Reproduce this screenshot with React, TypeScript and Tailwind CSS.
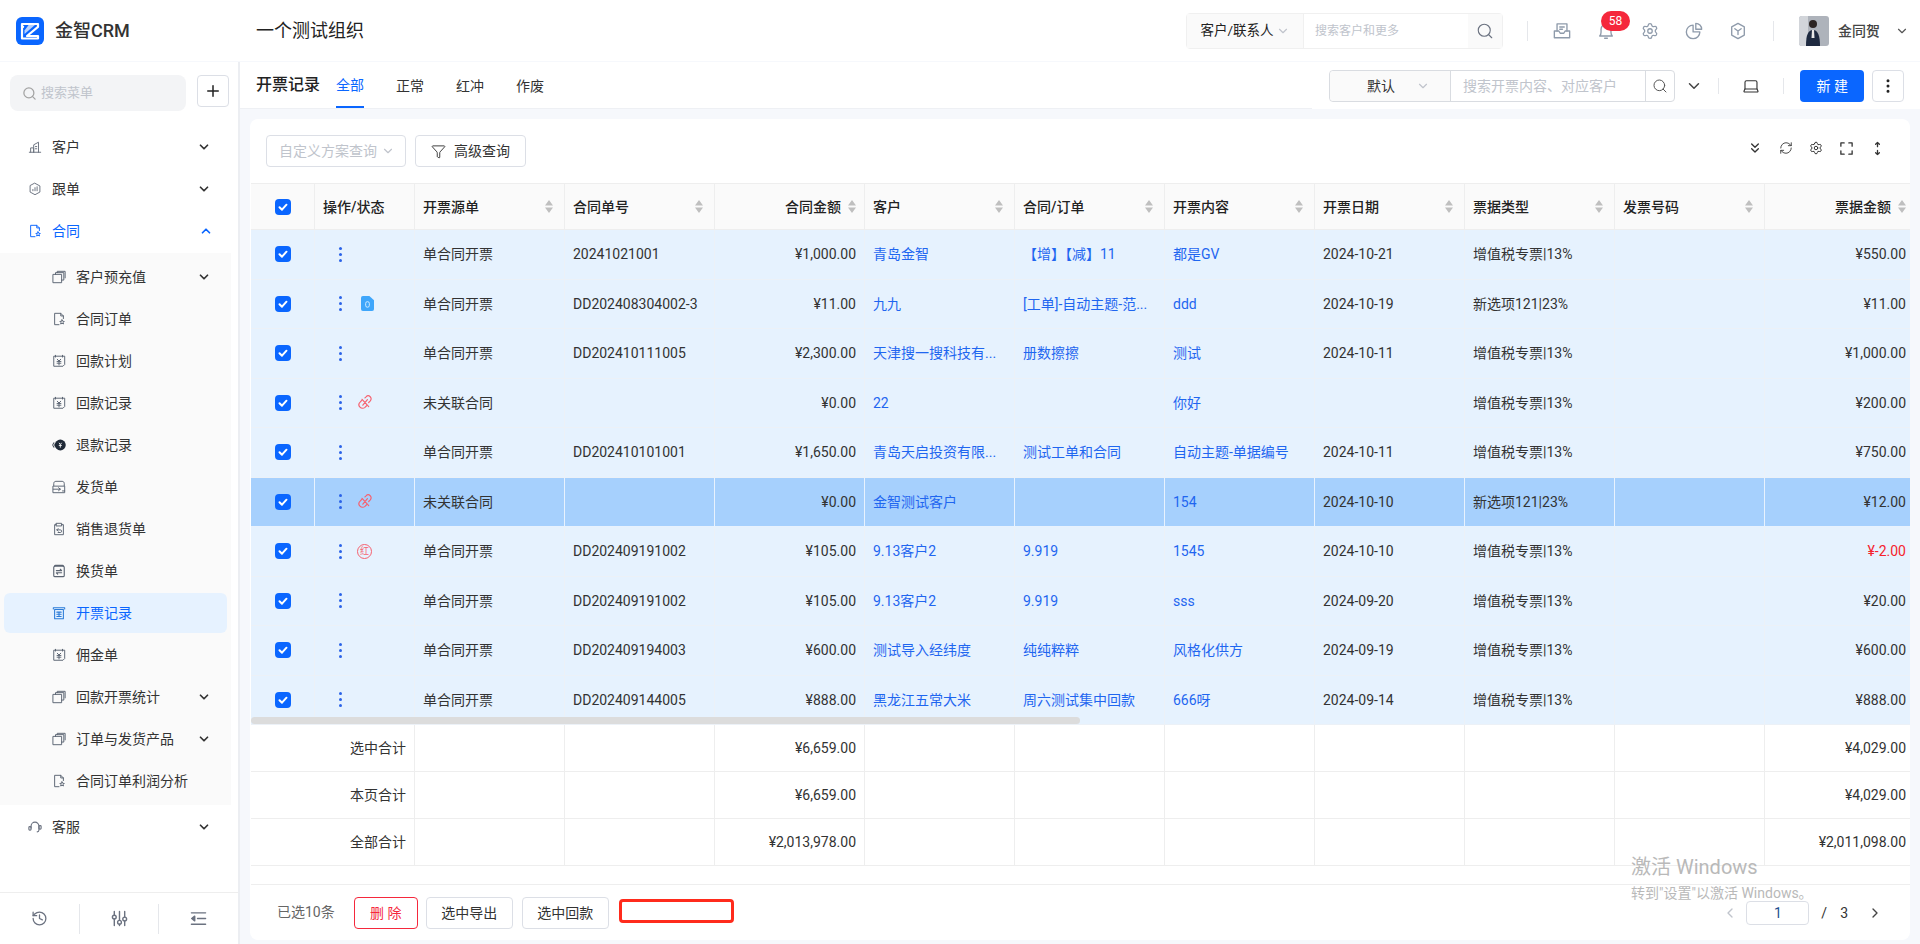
import React from "react";
import { ChevronDown, ChevronUp, ChevronLeft, ChevronRight, Plus, Search, Settings, Filter, MoreVertical, ChevronsDown, RefreshCw, History, Laptop } from "lucide-react";

type P = { className?: string };
const S = ({ className, children, vb = "0 0 16 16", sw = 1.1 }: P & { children: React.ReactNode; vb?: string; sw?: number }) => (
  <svg viewBox={vb} fill="none" stroke="currentColor" strokeWidth={sw} strokeLinecap="round" strokeLinejoin="round" className={className}>{children}</svg>
);

const Building = (p: P) => <S {...p}><path d="M1.5 14h13M3 14V9h3.5v5M6.5 14V5.5L12 2.5V14M8.5 7.5h1.5M8.5 10h1.5" /></S>;
const HexBars = (p: P) => <S {...p}><path d="M8 1.5l5.6 3v7L8 14.5l-5.6-3v-7z" /><path d="M5.6 10V8.5M8 10V6.5M10.4 10V5.5" /></S>;
const DocStar = (p: P) => <S {...p}><path d="M8 14.5H3V1.5h7l3 3v3" /><path d="M10 1.5v3h3" /><path d="M11.5 9l.8 1.6 1.7.2-1.2 1.2.3 1.7-1.6-.8-1.6.8.3-1.7L9 10.8l1.7-.2z" /></S>;
const Stack = (p: P) => <S {...p}><rect x="1.5" y="5" width="9.5" height="9.5" /><path d="M4 5V3h9.5v8.5H11M6 3V1.5h9V9" /></S>;
const Pay = (p: P) => <S {...p}><path d="M4 2.5H2v11.5h10.5l2-2V2.5H12" /><path d="M4 1.5v2M12 1.5v2M4 2.5h8" /><path d="M6 6l2 2 2-2M5.8 8.5h4.4M5.8 10.5h4.4M8 8v4.5" /></S>;
const Refund = (p: P) => (
  <svg viewBox="0 0 16 16" className={p.className}>
    <circle cx="9.5" cy="8" r="6.2" fill="#1f2937" />
    <path d="M8 5.5l1.5 2 1.5-2M7.8 8.5h3.4M9.5 7.5v3.5" stroke="#fff" strokeWidth="1" fill="none" />
    <path d="M2.2 5L.8 8l1.4 3M4 5.5L3 8l1 2.5" stroke="#1f2937" strokeWidth="1" fill="none" />
  </svg>
);
const Ship = (p: P) => <S {...p}><path d="M2 6.5V4c0-1.5 1-2.5 2.5-2.5h7C13 1.5 14 2.5 14 4v2.5M1.5 7h13v7.5h-13z" /><path d="M1.5 10.5h8M7.5 8.8l2 1.7-2 1.7M12 12.5h2.5" /></S>;
const Ret = (p: P) => <S {...p}><path d="M5 3H3v11.5h10V3h-2" /><rect x="5" y="1.5" width="6" height="3" /><path d="M5.5 9h4c1 0 1.5.6 1.5 1.5S10.5 12 9.5 12H7M7 7.5L5.5 9 7 10.5" /></S>;
const Swap = (p: P) => <S {...p} sw={1.3}><rect x="2" y="2.5" width="12" height="12" rx="1.5" /><path d="M3 2.5c0-.7.3-1 1-1h8c.7 0 1 .3 1 1M5 7.5h6l-1.5-1.5M11 10H5l1.5 1.5" /></S>;
const Printer = (p: P) => <S {...p} sw={1.2}><path d="M1.5 2h13M1.5 2v1.500M14.500 2v1.500M3 14.500V4h10v10.500z" /><path d="M5.500 7h5M5.500 9.500h5M8 7v5M5.500 12h5" /></S>;
const Headset = (p: P) => <S {...p} sw={1.3}><path d="M3.500 9V7a4.500 4.500 0 0 1 9 0v4.500c0 1.500-1 2-2 2" /><rect x="1" y="7.500" width="2.500" height="4" rx="1" /><rect x="12.500" y="6.500" width="2.500" height="4" rx="1" /></S>;
const Sliders = (p: P) => <S {...p} sw={1.5} vb="0 0 18 18"><path d="M3.500 1.500v4M3.500 9.500v7M9 1.500v9.500M9 15v1.500M14.500 1.500v6M14.500 11.500v5" /><circle cx="3.500" cy="7.500" r="2" /><circle cx="9" cy="13" r="2" /><circle cx="14.500" cy="9.500" r="2" /></S>;
const Collapse = (p: P) => <S {...p} sw={1.5} vb="0 0 18 18"><path d="M1.500 3h15M8 9h8.500M1.500 15h15" /><path d="M5 6.500L1.800 9 5 11.500z" fill="currentColor" /></S>;
const InboxDoc = (p: P) => <S {...p} vb="0 0 20 20" sw={1.5}><path d="M4.500 10V2h11v8M7.500 5.500h5M7.500 8h3" /><path d="M1.500 10h5l1.500 2.500h4L13.500 10h5v7.500h-17z" /></S>;
const Bell = (p: P) => <S {...p} vb="0 0 20 20" sw={1.500}><path d="M3 15.500c1-1 1.500-2 1.500-4V8a5.500 5.500 0 0 1 11 0v3.500c0 2 .5 3 1.500 4z" /><path d="M8.500 18h3" /></S>;
const PieC = (p: P) => <S {...p} vb="0 0 20 20" sw={1.500}><path d="M9 3.500a7.500 7.500 0 1 0 7.500 7.500H9z" /><path d="M12 1.500a6.500 6.500 0 0 1 6.500 6.500H12z" /></S>;
const HexY = (p: P) => <S {...p} vb="0 0 20 20" sw={1.500}><path d="M10 1.500l7 4v9l-7 4-7-4v-9z" /><path d="M6.500 7.500L10 10l3.500-2.500M10 10v4" /></S>;
const Corners = (p: P) => <S {...p} sw={1.400}><path d="M2 5.500V2h3.500M10.500 2H14v3.500M14 10.500V14h-3.500M5.500 14H2v-3.500" /></S>;
const UpDown = (p: P) => <S {...p} sw={1.400}><path d="M8 1.500v4.500M6 3.500l2-2 2 2M8 10v4.500M6 12.500l2 2 2-2" /></S>;
const Broken = (p: P) => <S {...p} sw={1.100} vb="0 0 14 14"><path d="M6.500 2.700l1-1a2.700 2.700 0 0 1 4 3.800l-1.500 1.500M3.500 5L2 6.700a3 3 0 0 0 4.500 4.800L8 10" /><path d="M8.800 4.300L4.500 9.500M3.800 4L10 10.800" /></S>;
const Lock = (p: P) => (
  <svg viewBox="0 0 14 16" className={p.className}>
    <path d="M2 0h7l5 4.500V14a2 2 0 0 1-2 2H2a2 2 0 0 1-2-2V2a2 2 0 0 1 2-2z" fill="#3ea6fb" />
    <rect x="5" y="6" width="4" height="6" rx="2" fill="none" stroke="#d8eeff" strokeWidth="1" />
  </svg>
);
const Hong = (p: P) => (
  <span className={"flex items-center justify-center rounded-full border border-[#f6616f] text-[#f6616f] text-[9px] leading-none " + (p.className || "")}>红</span>
);

const Check = () => (
  <span className="flex h-4 w-4 items-center justify-center rounded-[4px] bg-[#0a66ff]">
    <svg viewBox="0 0 12 12" className="h-3 w-3" fill="none" stroke="#fff" strokeWidth="2" strokeLinecap="round" strokeLinejoin="round"><path d="M2.500 6.200l2.500 2.500 4.500-5" /></svg>
  </span>
);

const Sort = () => (
  <svg viewBox="0 0 8 13" className="h-[13px] w-2 shrink-0 fill-[#bfbfbf]"><path d="M4 0l4 5.500H0zM0 7.500h8L4 13z" /></svg>
);

const Kebab = () => (
  <span className="flex w-[3px] flex-col gap-[3px]">
    <i className="h-[3px] w-[3px] rounded-full bg-[#2b63e8]" />
    <i className="h-[3px] w-[3px] rounded-full bg-[#2b63e8]" />
    <i className="h-[3px] w-[3px] rounded-full bg-[#2b63e8]" />
  </span>
);

type Item = { icon: (p: P) => React.ReactNode; label: string; arrow?: boolean; active?: boolean };
const subs: Item[] = [
  { icon: Stack, label: "客户预充值", arrow: true },
  { icon: DocStar, label: "合同订单" },
  { icon: Pay, label: "回款计划" },
  { icon: Pay, label: "回款记录" },
  { icon: Refund, label: "退款记录" },
  { icon: Ship, label: "发货单" },
  { icon: Ret, label: "销售退货单" },
  { icon: Swap, label: "换货单" },
  { icon: Printer, label: "开票记录", active: true },
  { icon: Pay, label: "佣金单" },
  { icon: Stack, label: "回款开票统计", arrow: true },
  { icon: Stack, label: "订单与发货产品", arrow: true },
  { icon: DocStar, label: "合同订单利润分析" },
];

const TopItem = ({ icon: I, label, open }: { icon: (p: P) => React.ReactNode; label: string; open?: boolean }) => (
  <div className={"my-0.5 flex h-10 items-center text-sm " + (open ? "text-[#0a66ff]" : "text-[#333333]")}>
    <span className="ml-[28px] flex w-[14px] justify-center"><I className={"h-[14px] w-[14px] " + (open ? "text-[#0a66ff]" : "text-[#6b7280]")} /></span>
    <span className="ml-[10px] flex-1">{label}</span>
    {open ? <ChevronUp className="mr-[18px] h-[14px] w-[14px]" strokeWidth={3} /> : <ChevronDown className="mr-[20px] h-[14px] w-[14px] text-[#333333]" strokeWidth={3} />}
  </div>
);

const Sidebar = () => (
  <aside className="flex w-[240px] shrink-0 flex-col border-r-2 border-[#eceef2] bg-white">
    <div className="flex h-[63px] shrink-0 items-start pt-[13px]">
      <div className="ml-[10px] flex h-9 w-[176px] items-center rounded-lg bg-[#f3f4f6] pl-3 text-[13px] text-[#c0c4cc]">
        <Search className="h-[15px] w-[15px] text-[#a3a3a3]" />
        <span className="ml-[4px]">搜索菜单</span>
      </div>
      <div className="ml-[11px] flex h-8 w-8 items-center justify-center rounded border border-[#dcdfe6]">
        <Plus className="h-[18px] w-[18px] text-[#222222]" strokeWidth={2} />
      </div>
    </div>
    <nav className="w-[231px] flex-1 overflow-hidden">
      <TopItem icon={Building} label="客户" />
      <TopItem icon={HexBars} label="跟单" />
      <TopItem icon={DocStar} label="合同" open />
      <div className="mt-0.5 bg-[#fafafa] py-0.5">
        {subs.map((s) => (
          <div key={s.label} className={"mx-1 my-0.5 flex h-10 items-center rounded-md text-sm " + (s.active ? "bg-[#e6f2ff] text-[#0a66ff]" : "text-[#333333]")}>
            <span className="ml-[46px] flex w-[18px] justify-center"><s.icon className={"h-[14px] w-[14px] " + (s.active ? "text-[#2a7bd8]" : "text-[#5b6472]")} /></span>
            <span className="ml-[8px] flex-1 whitespace-nowrap">{s.label}</span>
            {s.arrow && <ChevronDown className="mr-[16px] h-[14px] w-[14px] text-[#333333]" strokeWidth={3} />}
          </div>
        ))}
      </div>
      <div className="mt-0.5"><TopItem icon={Headset} label="客服" /></div>
    </nav>
    <div className="flex h-[52px] shrink-0 items-center border-t border-[#eeeeee] text-[#6b7280]">
      <div className="flex h-[30px] w-20 items-center justify-center border-r border-[#e5e7eb]"><History className="h-[17px] w-[17px]" strokeWidth={1.8} /></div>
      <div className="flex h-[30px] w-20 items-center justify-center border-r border-[#e5e7eb]"><Sliders className="h-[17px] w-[17px]" /></div>
      <div className="flex h-[30px] w-[79px] items-center justify-center"><Collapse className="h-[17px] w-[17px]" /></div>
    </div>
  </aside>
);

const Header = () => (
  <header className="z-10 flex h-[61px] shrink-0 items-center bg-white">
    <div className="flex w-[256px] items-center pl-4">
      <svg viewBox="0 0 28 28" className="h-7 w-7">
        <rect width="28" height="28" rx="6" fill="#0a66ff" />
        <path d="M6 9.500V7h16v2.800L11 19h11v2.500H6V19z M8 10L6 9.500" fill="none" stroke="#fff" strokeWidth="2.200" strokeLinejoin="round" />
        <path d="M13 7.500h6.500L8.500 17v-3.500z" fill="#fff" opacity="0.7" />
      </svg>
      <span className="ml-[11px] text-[18px] font-medium text-[#333333]">金智CRM</span>
    </div>
    <span className="text-[18px] text-[#222222]">一个测试组织</span>
    <div className="ml-auto flex h-9 w-[317px] items-center rounded border border-[#f0f0f0] text-sm">
      <div className="flex h-full w-[117px] items-center justify-center gap-0.5 border-r border-[#f0f0f0] bg-[#fafafa] text-[#222222]">
        <span className="text-[13.500px]">客户/联系人</span>
        <ChevronDown className="h-[14px] w-[14px] text-[#c0c4cc]" />
      </div>
      <span className="ml-[11px] flex-1 text-xs text-[#c0c4cc]">搜索客户和更多</span>
      <div className="flex h-full w-[34px] items-center justify-center bg-[#fafafa]"><Search className="h-[18px] w-[18px] text-[#6b7280]" strokeWidth={1.5} /></div>
    </div>
    <div className="ml-6 h-5 w-px bg-[#e5e7eb]" />
    <div className="ml-[12px] flex text-[#8f9bab]">
      <span className="flex w-[44px] justify-center"><InboxDoc className="h-[18px] w-[18px]" /></span>
      <span className="relative flex w-[44px] justify-center">
        <Bell className="h-[18px] w-[18px]" />
        <span className="absolute -top-[11px] left-[17px] flex h-5 w-[29px] items-center justify-center rounded-full bg-[#f5283c] text-xs text-white">58</span>
      </span>
      <span className="flex w-[44px] justify-center"><Settings className="h-[18px] w-[18px]" strokeWidth={1.700} /></span>
      <span className="flex w-[44px] justify-center"><PieC className="h-[18px] w-[18px]" /></span>
      <span className="flex w-[44px] justify-center"><HexY className="h-[18px] w-[18px]" /></span>
    </div>
    <div className="ml-[13px] h-5 w-px bg-[#e5e7eb]" />
    <svg viewBox="0 0 30 30" className="ml-[25px] h-[30px] w-[30px] rounded-[3px]">
      <rect width="30" height="30" fill="#aeb3bb" />
      <rect x="0" y="0" width="9" height="30" fill="#d2d5da" />
      <circle cx="14" cy="8" r="4" fill="#2c2422" />
      <path d="M7 30c0-11 2-16 7-16s7 6 7 16z" fill="#1e2a40" />
      <path d="M13 14h2l.500 8h-3z" fill="#e8e8e8" />
    </svg>
    <span className="ml-[9px] text-sm font-medium text-[#444444]">金同贺</span>
    <ChevronDown className="ml-[15px] mr-[11px] h-[14px] w-[14px] text-[#555555]" />
  </header>
);

const SubHeader = () => (
  <div className="flex h-[47px] shrink-0">
    <div className="flex flex-1 items-end border-b border-[#eef0f4] bg-white pl-4">
      <span className="mb-[11px] text-base font-medium text-[#222222]">开票记录</span>
      <div className="ml-4 flex h-full gap-8 text-sm text-[#333333]">
        <span className="flex items-center border-b-2 border-[#0a66ff] pt-0.5 text-[#0a66ff]">全部</span>
        <span className="flex items-center pt-0.5">正常</span>
        <span className="flex items-center pt-0.5">红冲</span>
        <span className="flex items-center pt-0.5">作废</span>
      </div>
    </div>
    <div className="flex w-[608px] items-center bg-white pl-[17px] pr-4">
      <div className="flex h-8 w-[347px] items-center rounded border border-[#d9dce1] text-sm">
        <div className="flex h-full w-[120px] items-center rounded-l bg-[#fafafa] pl-[37px] text-[#333333]">
          <span>默认</span>
          <ChevronDown className="ml-[21px] h-[14px] w-[14px] text-[#c0c4cc]" />
        </div>
        <span className="flex h-full w-[196px] items-center border-x border-[#d9dce1] pl-3 text-[#c0c4cc]">搜索开票内容、对应客户</span>
        <span className="flex flex-1 justify-center"><Search className="h-4 w-4 text-[#555555]" strokeWidth={1.500} /></span>
      </div>
      <ChevronDown className="ml-[10px] h-[18px] w-[18px] text-[#444444]" strokeWidth={2} />
      <div className="ml-[15px] h-4 w-px bg-[#e5e7eb]" />
      <Laptop className="ml-[23px] h-[18px] w-[18px] text-[#333333]" strokeWidth={1.500} />
      <div className="ml-[23px] h-4 w-px bg-[#e5e7eb]" />
      <button className="ml-4 h-8 w-16 rounded bg-[#0a66ff] text-sm text-white">新 建</button>
      <button className="ml-2 flex h-8 w-8 items-center justify-center rounded border border-[#dcdfe6]">
        <MoreVertical className="h-[18px] w-[18px] text-[#222222]" strokeWidth={2} />
      </button>
    </div>
  </div>
);

const heads: [string, boolean?][] = [["开票源单"], ["合同单号"], ["合同金额", true], ["客户"], ["合同/订单"], ["开票内容"], ["开票日期"], ["票据类型"], ["发票号码"], ["票据金额", true]];

type RowT = { mark?: "lock" | "broken" | "hong"; src: string; no: string; amt: string; cust: string; order: string; content: string; date: string; type: string; total: string; red?: boolean; hi?: boolean };
const rows: RowT[] = [
  { src: "单合同开票", no: "20241021001", amt: "¥1,000.00", cust: "青岛金智", order: "【增】【减】11", content: "都是GV", date: "2024-10-21", type: "增值税专票|13%", total: "¥550.00" },
  { mark: "lock", src: "单合同开票", no: "DD202408304002-3", amt: "¥11.00", cust: "九九", order: "[工单]-自动主题-范...", content: "ddd", date: "2024-10-19", type: "新选项121|23%", total: "¥11.00" },
  { src: "单合同开票", no: "DD202410111005", amt: "¥2,300.00", cust: "天津搜一搜科技有...", order: "册数擦擦", content: "测试", date: "2024-10-11", type: "增值税专票|13%", total: "¥1,000.00" },
  { mark: "broken", src: "未关联合同", no: "", amt: "¥0.00", cust: "22", order: "", content: "你好", date: "", type: "增值税专票|13%", total: "¥200.00" },
  { src: "单合同开票", no: "DD202410101001", amt: "¥1,650.00", cust: "青岛天启投资有限...", order: "测试工单和合同", content: "自动主题-单据编号", date: "2024-10-11", type: "增值税专票|13%", total: "¥750.00" },
  { mark: "broken", hi: true, src: "未关联合同", no: "", amt: "¥0.00", cust: "金智测试客户", order: "", content: "154", date: "2024-10-10", type: "新选项121|23%", total: "¥12.00" },
  { mark: "hong", src: "单合同开票", no: "DD202409191002", amt: "¥105.00", cust: "9.13客户2", order: "9.919", content: "1545", date: "2024-10-10", type: "增值税专票|13%", total: "¥-2.00", red: true },
  { src: "单合同开票", no: "DD202409191002", amt: "¥105.00", cust: "9.13客户2", order: "9.919", content: "sss", date: "2024-09-20", type: "增值税专票|13%", total: "¥20.00" },
  { src: "单合同开票", no: "DD202409194003", amt: "¥600.00", cust: "测试导入经纬度", order: "纯纯粹粹", content: "风格化供方", date: "2024-09-19", type: "增值税专票|13%", total: "¥600.00" },
  { src: "单合同开票", no: "DD202409144005", amt: "¥888.00", cust: "黑龙江五常大米", order: "周六测试集中回款", content: "666呀", date: "2024-09-14", type: "增值税专票|13%", total: "¥888.00" },
];

const cellBase = "flex h-full w-[150px] shrink-0 items-center whitespace-nowrap border-r px-2";

const DataRow = ({ r }: { r: RowT }) => {
  const line = r.hi ? "border-[#e8f2fe]" : "border-[#ecf1f7]";
  const cell = cellBase + " " + line;
  const link = " text-[#1f66f0]";
  return (
    <div className={"flex h-[49.500px] border-b text-sm text-[#333333] " + line + (r.hi ? " bg-[#a6d0fd]" : " bg-[#e6f2fe]")}>
      <div className={"flex h-full w-16 shrink-0 items-center justify-center border-r " + line}><Check /></div>
      <div className={"flex h-full w-[100px] shrink-0 items-center border-r pl-[24px] " + line}>
        <Kebab />
        {r.mark === "lock" && <Lock className="ml-[19px] h-[15px] w-[13px]" />}
        {r.mark === "broken" && <Broken className="ml-[16px] h-[15px] w-[15px] text-[#f6616f]" />}
        {r.mark === "hong" && <Hong className="ml-[15px] h-[15px] w-[15px]" />}
      </div>
      <div className={cell}>{r.src}</div>
      <div className={cell}>{r.no}</div>
      <div className={cell + " justify-end"}>{r.amt}</div>
      <div className={cell + link}>{r.cust}</div>
      <div className={cell + link}>{r.order}</div>
      <div className={cell + link}>{r.content}</div>
      <div className={cell}>{r.date}</div>
      <div className={cell}>{r.type}</div>
      <div className={cell}></div>
      <div className={cell + " justify-end" + (r.red ? " text-[#f5222d]" : "")}>{r.total}</div>
    </div>
  );
};

const SumRow = ({ label, a, b }: { label: string; a: string; b: string }) => {
  const cell = "flex h-full w-[150px] shrink-0 items-center justify-end whitespace-nowrap border-r border-[#eeeeee] px-2";
  return (
    <div className="flex h-[47px] border-b border-[#eeeeee] text-sm text-[#333333]">
      <div className="flex h-full w-[164px] shrink-0 items-center justify-end border-r border-[#eeeeee] pr-2">{label}</div>
      <div className={cell} />
      <div className={cell} />
      <div className={cell}>{a}</div>
      <div className={cell} />
      <div className={cell} />
      <div className={cell} />
      <div className={cell} />
      <div className={cell} />
      <div className={cell} />
      <div className={cell}>{b}</div>
    </div>
  );
};

const Card = () => (
  <section className="ml-[10px] mt-[10px] flex h-[821px] w-[1660px] flex-col overflow-hidden rounded-lg bg-white">
    <div className="flex h-16 shrink-0 items-start justify-between pl-4 pr-[25px] pt-4">
      <div className="flex">
        <div className="flex h-8 w-[140px] items-center rounded-sm border border-[#dcdfe6] pl-3 text-sm text-[#c0c4cc]">
          <span>自定义方案查询</span>
          <ChevronDown className="ml-1 h-[14px] w-[14px]" />
        </div>
        <button className="ml-[9px] flex h-8 w-[111px] items-center justify-center rounded border border-[#dcdfe6] text-sm text-[#333333]">
          <Filter className="mr-2 h-[15px] w-[15px]" strokeWidth={1.500} />
          高级查询
        </button>
      </div>
      <div className="flex items-center gap-4 pt-[5px] text-[#333333]">
        <ChevronsDown className="h-4 w-4" strokeWidth={2} />
        <RefreshCw className="h-[14px] w-[14px]" strokeWidth={1.500} />
        <Settings className="h-[14px] w-[14px]" strokeWidth={1.700} />
        <Corners className="h-[15px] w-[15px]" />
        <UpDown className="h-[15px] w-[15px]" />
      </div>
    </div>
    <div className="relative ml-px overflow-hidden border-t border-[#eeeeee]">
      <div className="flex h-[46px] w-max border-b border-[#eeeeee] bg-[#fafafa] text-sm font-medium text-[#222222]">
        <div className="flex h-full w-16 shrink-0 items-center justify-center border-r border-[#eeeeee]"><Check /></div>
        <div className="flex h-full w-[100px] shrink-0 items-center border-r border-[#eeeeee] px-2">操作/状态</div>
        {heads.map(([h, right]) => (
          <div key={h} className={"flex h-full w-[150px] shrink-0 items-center border-r border-[#eeeeee] px-2 " + (right ? "justify-end gap-[7px]" : "justify-between pr-[11px]")}>
            <span>{h}</span>
            {h === "合同/订单" || <Sort />}
            {h === "合同/订单" && <Sort />}
          </div>
        ))}
      </div>
      <div className="relative h-[495px] w-max overflow-hidden">
        {rows.map((r, i) => <DataRow key={i} r={r} />)}
        <div className="absolute left-0 top-[487px] h-[7px] w-[829px] rounded-full bg-[#dcdcdc]" />
      </div>
      <div className="w-max">
        <SumRow label="选中合计" a="¥6,659.00" b="¥4,029.00" />
        <SumRow label="本页合计" a="¥6,659.00" b="¥4,029.00" />
        <SumRow label="全部合计" a="¥2,013,978.00" b="¥2,011,098.00" />
      </div>
      <div className="h-[19px] border-b border-[#eeeeee]" />
    </div>
    <div className="flex flex-1 items-start pt-[12px] text-sm">
      <span className="ml-[27px] mt-[5px] text-[#666666]">已选10条</span>
      <button className="ml-[19px] h-8 w-16 rounded border border-[#f5283c] text-[#f5283c]">删 除</button>
      <button className="ml-2 h-8 w-[87px] rounded border border-[#dcdfe6] text-[#333333]">选中导出</button>
      <button className="ml-[9px] h-8 w-[87px] rounded border border-[#dcdfe6] text-[#333333]">选中回款</button>
      <div className="ml-[10px] mt-[2px] h-6 w-[115px] rounded-sm border-[3px] border-[#ff2b1c]" />
      <div className="ml-auto mr-[27px] mt-[4px] flex items-center text-[#333333]">
        <ChevronLeft className="h-4 w-4 text-[#c0c4cc]" />
        <span className="ml-[8px] flex h-6 w-[63px] items-center justify-center rounded border border-[#dcdfe6] text-[#1f4f8f]">1</span>
        <span className="ml-[12px]">/</span>
        <span className="ml-[13px]">3</span>
        <ChevronRight className="ml-[19px] h-4 w-4 text-[#444444]" />
      </div>
    </div>
  </section>
);

export default function App() {
  return (
    <div className="relative flex h-[944px] w-[1920px] flex-col overflow-hidden bg-[#f6f8fc] font-[family-name:Roboto,'Noto_Sans_CJK_SC',sans-serif]">
      <Header />
      <div className="mt-px flex flex-1">
        <Sidebar />
        <main className="flex flex-1 flex-col">
          <SubHeader />
          <Card />
        </main>
      </div>
      <div className="pointer-events-none absolute left-[1631px] top-[853px] text-[#b9b9b9]">
        <div className="text-[20px] leading-[28px]">激活 Windows</div>
        <div className="mt-[2px] text-sm leading-5">转到"设置"以激活 Windows。</div>
      </div>
    </div>
  );
}
